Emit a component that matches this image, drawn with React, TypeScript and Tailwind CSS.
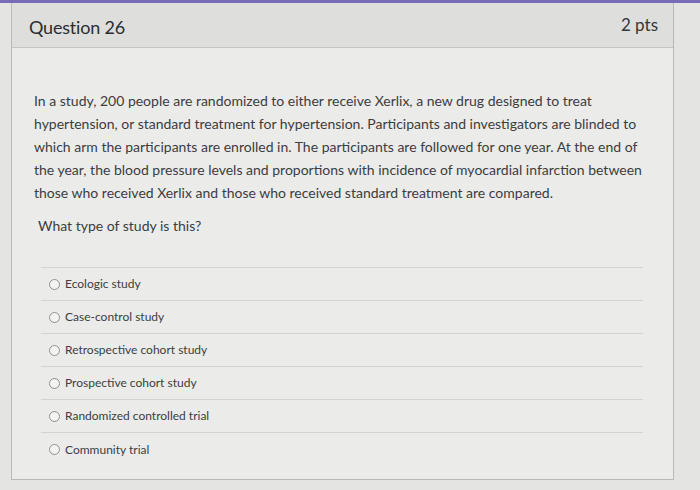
import { useState } from "react";

const answers = [
  "Ecologic study",
  "Case-control study",
  "Retrospective cohort study",
  "Prospective cohort study",
  "Randomized controlled trial",
  "Community trial",
];

export default function App() {
  const [picked, setPicked] = useState<number | null>(null);

  return (
    <div
      className="w-[700px] h-[490px] bg-[#e4e4e2] overflow-hidden flex flex-col"
      style={{ fontFamily: "Lato, 'Open Sans', sans-serif" }}
    >
      <div className="h-[3px] bg-[#7a6bb8] shrink-0" />
      <div className="flex-1 flex pl-[11px] pr-[26px] pb-[10px]">
        <div className="flex-1 flex flex-col border border-[#b9b9b7] border-t-0 bg-[#ebebe9]">
          <div className="h-[45px] shrink-0 flex items-center justify-between pt-[4px] pl-[17px] pr-[15px] bg-[#dededc] border-b border-[#c4c4c2]">
            <h2 className="text-[18px] text-[#2a2e31] tracking-[-0.2px]">Question 26</h2>
            <span className="text-[17px] text-[#34373a] -mt-[4px]">2 pts</span>
          </div>
          <div className="pl-[22px] pr-[20px] pt-[41px] text-[#3b3d3f]">
            <p className="text-[14px] leading-[23px] w-[615px]">
              In a study, 200 people are randomized to either receive Xerlix, a new drug designed to treat
              hypertension, or standard treatment for hypertension. Participants and investigators are blinded to
              which arm the participants are enrolled in. The participants are followed for one year. At the end of
              the year, the blood pressure levels and proportions with incidence of myocardial infarction between
              those who received Xerlix and those who received standard treatment are compared.
            </p>
            <p className="text-[14px] leading-[23px] mt-[10px] pl-[4px]">What type of study is this?</p>
            <div className="mt-[30px] ml-[7px] mr-[10px] border-t border-[#d3d3d1]">
              {answers.map((a, i) => (
                <label
                  key={a}
                  className="h-[33px] flex items-center gap-[5px] pl-[8px] border-b border-[#d3d3d1] last:border-b-0 cursor-pointer"
                  onClick={() => setPicked(i)}
                >
                  <span className="w-[11px] h-[11px] rounded-full border border-[#8f9193] bg-[#f4f4f2] flex items-center justify-center">
                    {picked === i && <span className="w-[5px] h-[5px] rounded-full bg-[#555]" />}
                  </span>
                  <span className="text-[12px] text-[#3c3e40]">{a}</span>
                </label>
              ))}
            </div>
          </div>
        </div>
      </div>
    </div>
  );
}
